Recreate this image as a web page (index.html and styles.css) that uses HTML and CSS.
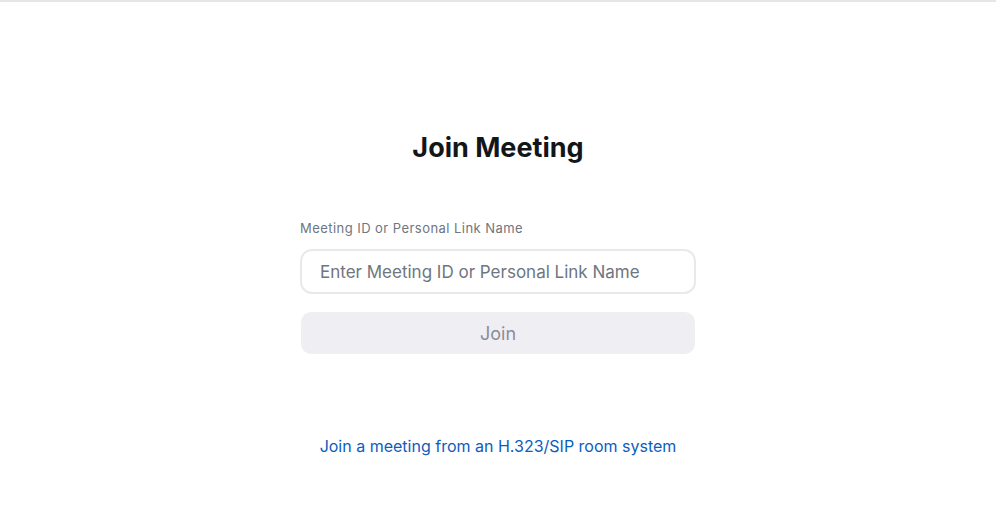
FILE: index.html
```html
<!DOCTYPE html>
<html lang="en">
<head>
<meta charset="utf-8">
<title>Join Meeting</title>
<link rel="stylesheet" href="styles.css">
</head>
<body>
<div class="topbar"></div>
<main class="page">
  <h1 class="title">Join Meeting</h1>
  <form class="form">
    <label class="label" for="mid">Meeting ID or Personal Link Name</label>
    <input id="mid" class="input" type="text" placeholder="Enter Meeting ID or Personal Link Name">
    <button type="button" class="btn" disabled>Join</button>
  </form>
  <a class="link" href="#">Join a meeting from an H.323/SIP room system</a>
</main>
</body>
</html>
```
FILE: styles.css
```css
* { box-sizing: border-box; }
html, body { margin: 0; padding: 0; background: #fff; }
body { font-family: Inter, "Liberation Sans", Arial, sans-serif; color: #131619; }
.topbar { height: 2px; background: #e6e6e6; }
.page {
  display: flex;
  flex-direction: column;
  align-items: center;
  padding-top: 128px;
}
.title {
  margin: 0;
  font-size: 27px;
  font-weight: 700;
  line-height: 36px;
  letter-spacing: 0;
  color: #131619;
}
.form {
  width: 396px;
  margin-top: 54px;
  display: flex;
  flex-direction: column;
}
.label {
  font-size: 13px;
  line-height: 16px;
  letter-spacing: 0.45px;
  color: #6e7680;
}
.input {
  margin-top: 13px;
  height: 45px;
  border: 2px solid #e8e8ed;
  border-radius: 12px;
  padding: 0 18px;
  font-family: inherit;
  font-size: 17px;
  color: #131619;
  outline: none;
}
.input::placeholder { color: #6e7680; opacity: 1; }
.btn {
  margin: 18px 1px 0;
  height: 42px;
  border: none;
  border-radius: 10px;
  background: #efeff3;
  color: #8c8c99;
  font-family: inherit;
  font-size: 18px;
}
.link {
  margin-top: 82px;
  font-size: 16px;
  line-height: 20px;
  color: #0e5cbc;
  text-decoration: none;
}
```
